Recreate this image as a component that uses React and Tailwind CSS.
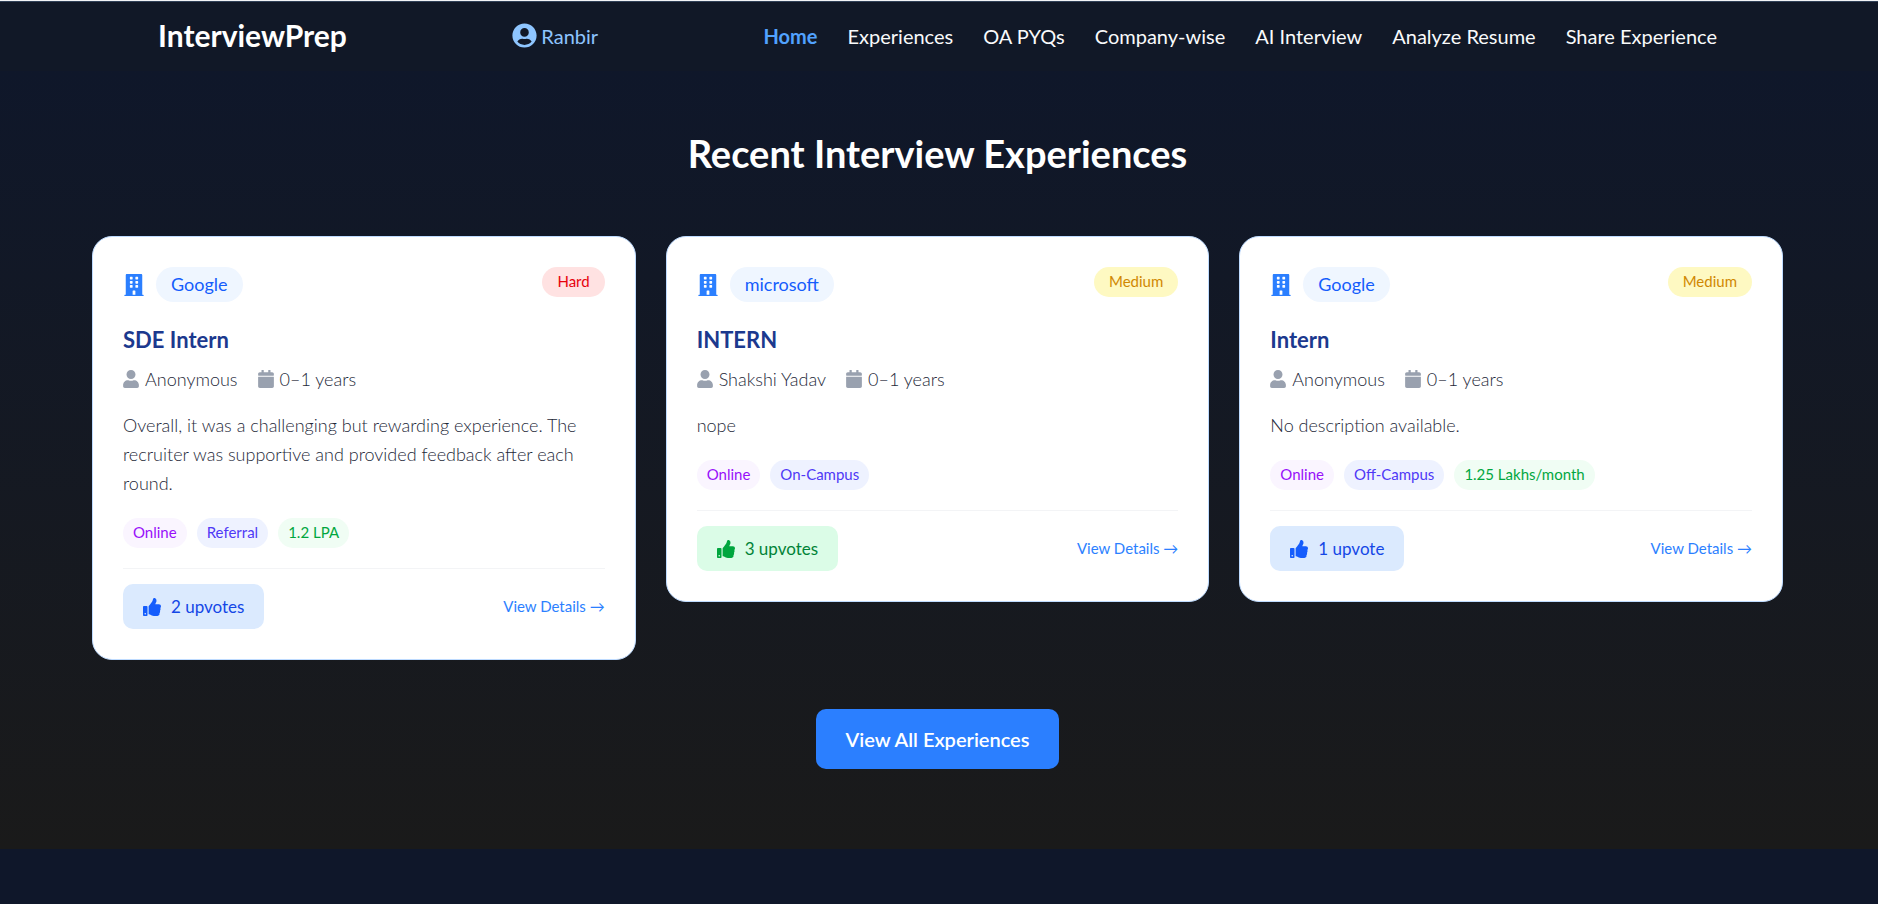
import React from "react";
import { FaBuilding, FaUser, FaCalendar, FaThumbsUp, FaUserCircle } from "react-icons/fa";

const navItems = [
  "Home",
  "Experiences",
  "OA PYQs",
  "Company-wise",
  "AI Interview",
  "Analyze Resume",
  "Share Experience",
];

const cards = [
  {
    company: "Google",
    level: "Hard",
    levelClass: "bg-red-100 text-red-600",
    role: "SDE Intern",
    author: "Anonymous",
    text: "Overall, it was a challenging but rewarding experience. The recruiter was supportive and provided feedback after each round.",
    place: "Referral",
    pay: "1.2 LPA",
    votes: "2 upvotes",
    voteClass: "bg-blue-100 text-blue-700",
    thumbClass: "text-blue-600",
  },
  {
    company: "microsoft",
    level: "Medium",
    levelClass: "bg-yellow-100 text-yellow-600",
    role: "INTERN",
    author: "Shakshi Yadav",
    text: "nope",
    place: "On-Campus",
    votes: "3 upvotes",
    voteClass: "bg-green-100 text-green-700",
    thumbClass: "text-green-600",
  },
  {
    company: "Google",
    level: "Medium",
    levelClass: "bg-yellow-100 text-yellow-600",
    role: "Intern",
    author: "Anonymous",
    text: "No description available.",
    place: "Off-Campus",
    pay: "1.25 Lakhs/month",
    votes: "1 upvote",
    voteClass: "bg-blue-100 text-blue-700",
    thumbClass: "text-blue-600",
  },
];

function Tag({ className, children }) {
  return (
    <span className={"flex h-[30px] items-center rounded-full px-[10px] pb-[2px] text-[15px] " + className}>
      {children}
    </span>
  );
}

function Card({ card }) {
  return (
    <article className="rounded-[20px] border border-blue-200 bg-white p-[30px]">
      <div className="flex items-start justify-between">
        <div className="flex items-center gap-[11px]">
          <FaBuilding className="size-[22px] text-blue-500" />
          <span className="flex h-[35px] items-center rounded-full bg-blue-50 px-[15px] text-[18px] text-blue-600">
            {card.company}
          </span>
        </div>
        <span className={"flex h-[30px] items-center rounded-full px-[15px] pb-[2px] text-[15px] " + card.levelClass}>
          {card.level}
        </span>
      </div>
      <h3 className="mt-5 text-[22px] leading-[35px] font-bold text-blue-900">{card.role}</h3>
      <div className="mt-[7px] flex items-center gap-5 text-[18px] leading-[30px] font-light text-gray-800">
        <span className="flex items-center gap-[6px]">
          <FaUser className="h-[18px] w-4 text-gray-400" />
          {card.author}
        </span>
        <span className="flex items-center gap-[6px]">
          <FaCalendar className="h-[18px] w-4 text-gray-400" />
          0–1 years
        </span>
      </div>
      <p className="mt-[17px] text-[18px] leading-[29px] font-light text-gray-800">{card.text}</p>
      <div className="mt-5 flex flex-wrap gap-[10px]">
        <Tag className="bg-purple-50 text-purple-600">Online</Tag>
        <Tag className="bg-indigo-50 text-indigo-600">{card.place}</Tag>
        {card.pay && <Tag className="bg-green-50 text-green-600">{card.pay}</Tag>}
      </div>
      <div className="mt-5 flex items-center justify-between border-t border-gray-100 pt-[15px]">
        <button
          type="button"
          className={"flex h-[45px] items-center gap-[10px] rounded-[10px] px-5 text-[17px] " + card.voteClass}
        >
          <FaThumbsUp className={"size-[18px] " + card.thumbClass} />
          {card.votes}
        </button>
        <a href="#details" className="text-[15px] text-blue-500">
          View Details →
        </a>
      </div>
    </article>
  );
}

export default function App() {
  return (
    <div className="min-h-screen bg-[#0f172a] font-['Lato','Liberation_Sans',sans-serif]">
      <header className="border-t border-gray-100 bg-[#111827]">
        <nav className="flex h-[70px] items-center justify-between border-t border-slate-700 pr-[161px] pb-[2px] pl-[158px] text-[20px] text-gray-50">
          <a href="#top" className="text-[30px] font-bold text-white">InterviewPrep</a>
          <a href="#profile" className="flex items-center gap-1 text-blue-300">
            <FaUserCircle className="size-[25px]" />
            Ranbir
          </a>
          <ul className="flex gap-[30px]">
            {navItems.map((item, i) => (
              <li key={item}>
                <a href={"#" + i} className={i === 0 ? "font-bold text-blue-400" : ""}>{item}</a>
              </li>
            ))}
          </ul>
        </nav>
      </header>
      <main className="flex flex-col items-center bg-linear-to-b from-[#0f172a] to-[#1a1a1a] pt-[52px] pr-[95px] pb-20 pl-[92px]">
        <h2 className="text-[38px] leading-[60px] font-bold text-white">Recent Interview Experiences</h2>
        <div className="mt-[53px] grid w-full grid-cols-3 items-start gap-[30px]">
          {cards.map((card, i) => (
            <Card key={i} card={card} />
          ))}
        </div>
        <a
          href="#all"
          className="mt-[49px] flex h-[60px] items-center rounded-[10px] bg-blue-500 px-[30px] text-[20px] font-semibold text-white"
        >
          View All Experiences
        </a>
      </main>
    </div>
  );
}
